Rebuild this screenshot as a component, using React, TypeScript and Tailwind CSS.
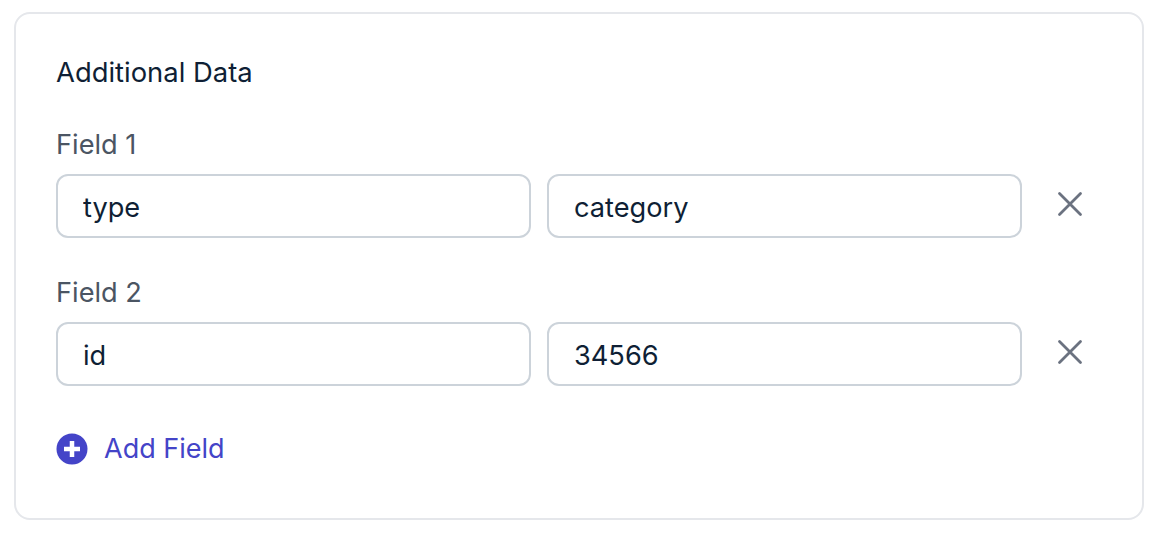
const F = "font-['Inter',sans-serif]";

function XIcon() {
  return (
    <svg width="28" height="28" viewBox="0 0 28 28" fill="none" stroke="#6b7280" strokeWidth="2.8" strokeLinecap="round" aria-hidden="true">
      <path d="M3.5 3.5 24.5 24.5M24.5 3.5 3.5 24.5" />
    </svg>
  );
}

function Row({ label, name, value }: { label: string; name: string; value: string }) {
  return (
    <div className="flex flex-col">
      <div className="h-[40px] text-[27.2px] leading-[40px] text-[#4b5563]">{label}</div>
      <div className="mt-[9px] flex items-center gap-[16px]">
        <input
          readOnly
          value={name}
          className="h-[64px] w-[475px] rounded-[12px] border-2 border-[#ccd3da] bg-white px-[25px] pt-[3px] text-[27.2px] text-[#0f1f35] outline-none"
        />
        <input
          readOnly
          value={value}
          className="h-[64px] w-[475px] rounded-[12px] border-2 border-[#ccd3da] bg-white px-[25px] pt-[3px] text-[27.2px] text-[#0f1f35] outline-none"
        />
        <button className="ml-[18px] -mt-[4px] flex h-[28px] w-[28px] items-center justify-center">
          <XIcon />
        </button>
      </div>
    </div>
  );
}

export default function App() {
  return (
    <div className={`${F} min-h-[546px] bg-white pl-[14px] pt-[12px]`}>
      <div className="flex h-[508px] w-[1130px] flex-col rounded-[16px] border-2 border-[#e5e7eb] bg-white pl-[40px] pt-[38px]">
        <h2 className="h-[41px] text-[27.4px] leading-[41px] font-normal text-[#0f1f35]">Additional Data</h2>
        <div className="mt-[32px] flex flex-col gap-[35px]">
          <Row label="Field 1" name="type" value="category" />
          <Row label="Field 2" name="id" value="34566" />
        </div>
        <button className="mt-[43px] flex items-center gap-[16px] self-start text-[27px] leading-[40px] text-[#4444c8]">
          <svg width="32" height="32" viewBox="0 0 32 32" aria-hidden="true">
            <circle cx="16" cy="16" r="15.5" fill="#4444c8" />
            <path d="M16 8v16M8 16h16" stroke="#fff" strokeWidth="4.5" />
          </svg>
          Add Field
        </button>
      </div>
    </div>
  );
}
